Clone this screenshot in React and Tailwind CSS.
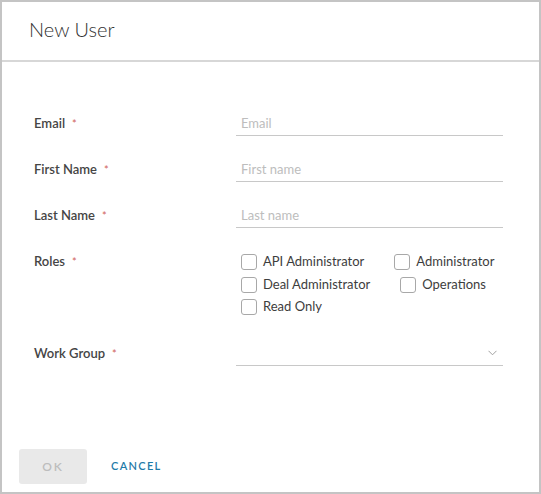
import React from "react";

const font = { fontFamily: "Lato, 'Open Sans', sans-serif" };

const roles = [
  "API Administrator",
  "Administrator",
  "Deal Administrator",
  "Operations",
  "Read Only",
];

const Label = ({ children }) => (
  <div className="w-[202px] shrink-0 text-[13px] font-semibold text-[#454545]">
    {children}
    <span className="ml-[7px] text-[11px] font-normal text-[#d0605a]">*</span>
  </div>
);

const TextRow = ({ label, placeholder, className = "" }) => (
  <div className={`flex items-center ${className}`}>
    <Label>{label}</Label>
    <input
      type="text"
      placeholder={placeholder}
      className="h-[25px] w-[267px] border-b border-[#c8c8c8] px-[5px] text-[13px] text-[#333] placeholder:text-[#bdbdbd] focus:outline-none"
      style={font}
    />
  </div>
);

const Checkbox = ({ label }) => (
  <label className="flex h-[18px] items-center gap-[6px] text-[13px] text-[#3d3d3d]">
    <span className="h-[16px] w-[16px] rounded-[3px] border border-[#a8a8a8] bg-white" />
    {label}
  </label>
);

export default function App() {
  return (
    <div
      className="flex h-[494px] w-[541px] flex-col border-2 border-[#c4c4c4] bg-white"
      style={font}
    >
      {/* header */}
      <div className="flex h-[60px] items-center border-b-2 border-[#d7d7d7] pb-[5px] pl-[27px] text-[20px] font-light text-[#313131]">
        New User
      </div>

      {/* form */}
      <div className="flex-1 pl-[32px] pt-[49px]">
        <TextRow label="Email" placeholder="Email" />
        <TextRow label="First Name" placeholder="First name" className="mt-[21px]" />
        <TextRow label="Last Name" placeholder="Last name" className="mt-[21px]" />

        <div className="mt-[23px] flex">
          <div className="flex h-[22px] items-center">
            <Label>Roles</Label>
          </div>
          <div className="flex w-[267px] flex-wrap gap-x-[30px] gap-y-[4.5px] pl-[5px] pt-[2px]">
            {roles.map((r) => (
              <Checkbox key={r} label={r} />
            ))}
          </div>
        </div>

        <div className="mt-[25px] flex items-center">
          <Label>Work Group</Label>
          <div className="flex h-[25px] w-[267px] items-center justify-end border-b border-[#c8c8c8] pr-[6px]">
            <svg width="9" height="6" viewBox="0 0 9 6" fill="none">
              <path d="M0.5 0.8 L4.5 4.8 L8.5 0.8" stroke="#a0a0a0" strokeWidth="1" />
            </svg>
          </div>
        </div>
      </div>

      {/* footer */}
      <div className="flex items-center gap-[12px] pb-[8px] pl-[17px]">
        <button
          disabled
          className="h-[35px] w-[68px] rounded-[3px] bg-[#e9e9e9] text-[12px] font-semibold tracking-[0.15em] text-[#bdbdbd]"
        >
          OK
        </button>
        <button className="h-[35px] px-[12px] text-[11px] font-semibold tracking-[0.12em] text-[#1f7ba8]">
          CANCEL
        </button>
      </div>
    </div>
  );
}
